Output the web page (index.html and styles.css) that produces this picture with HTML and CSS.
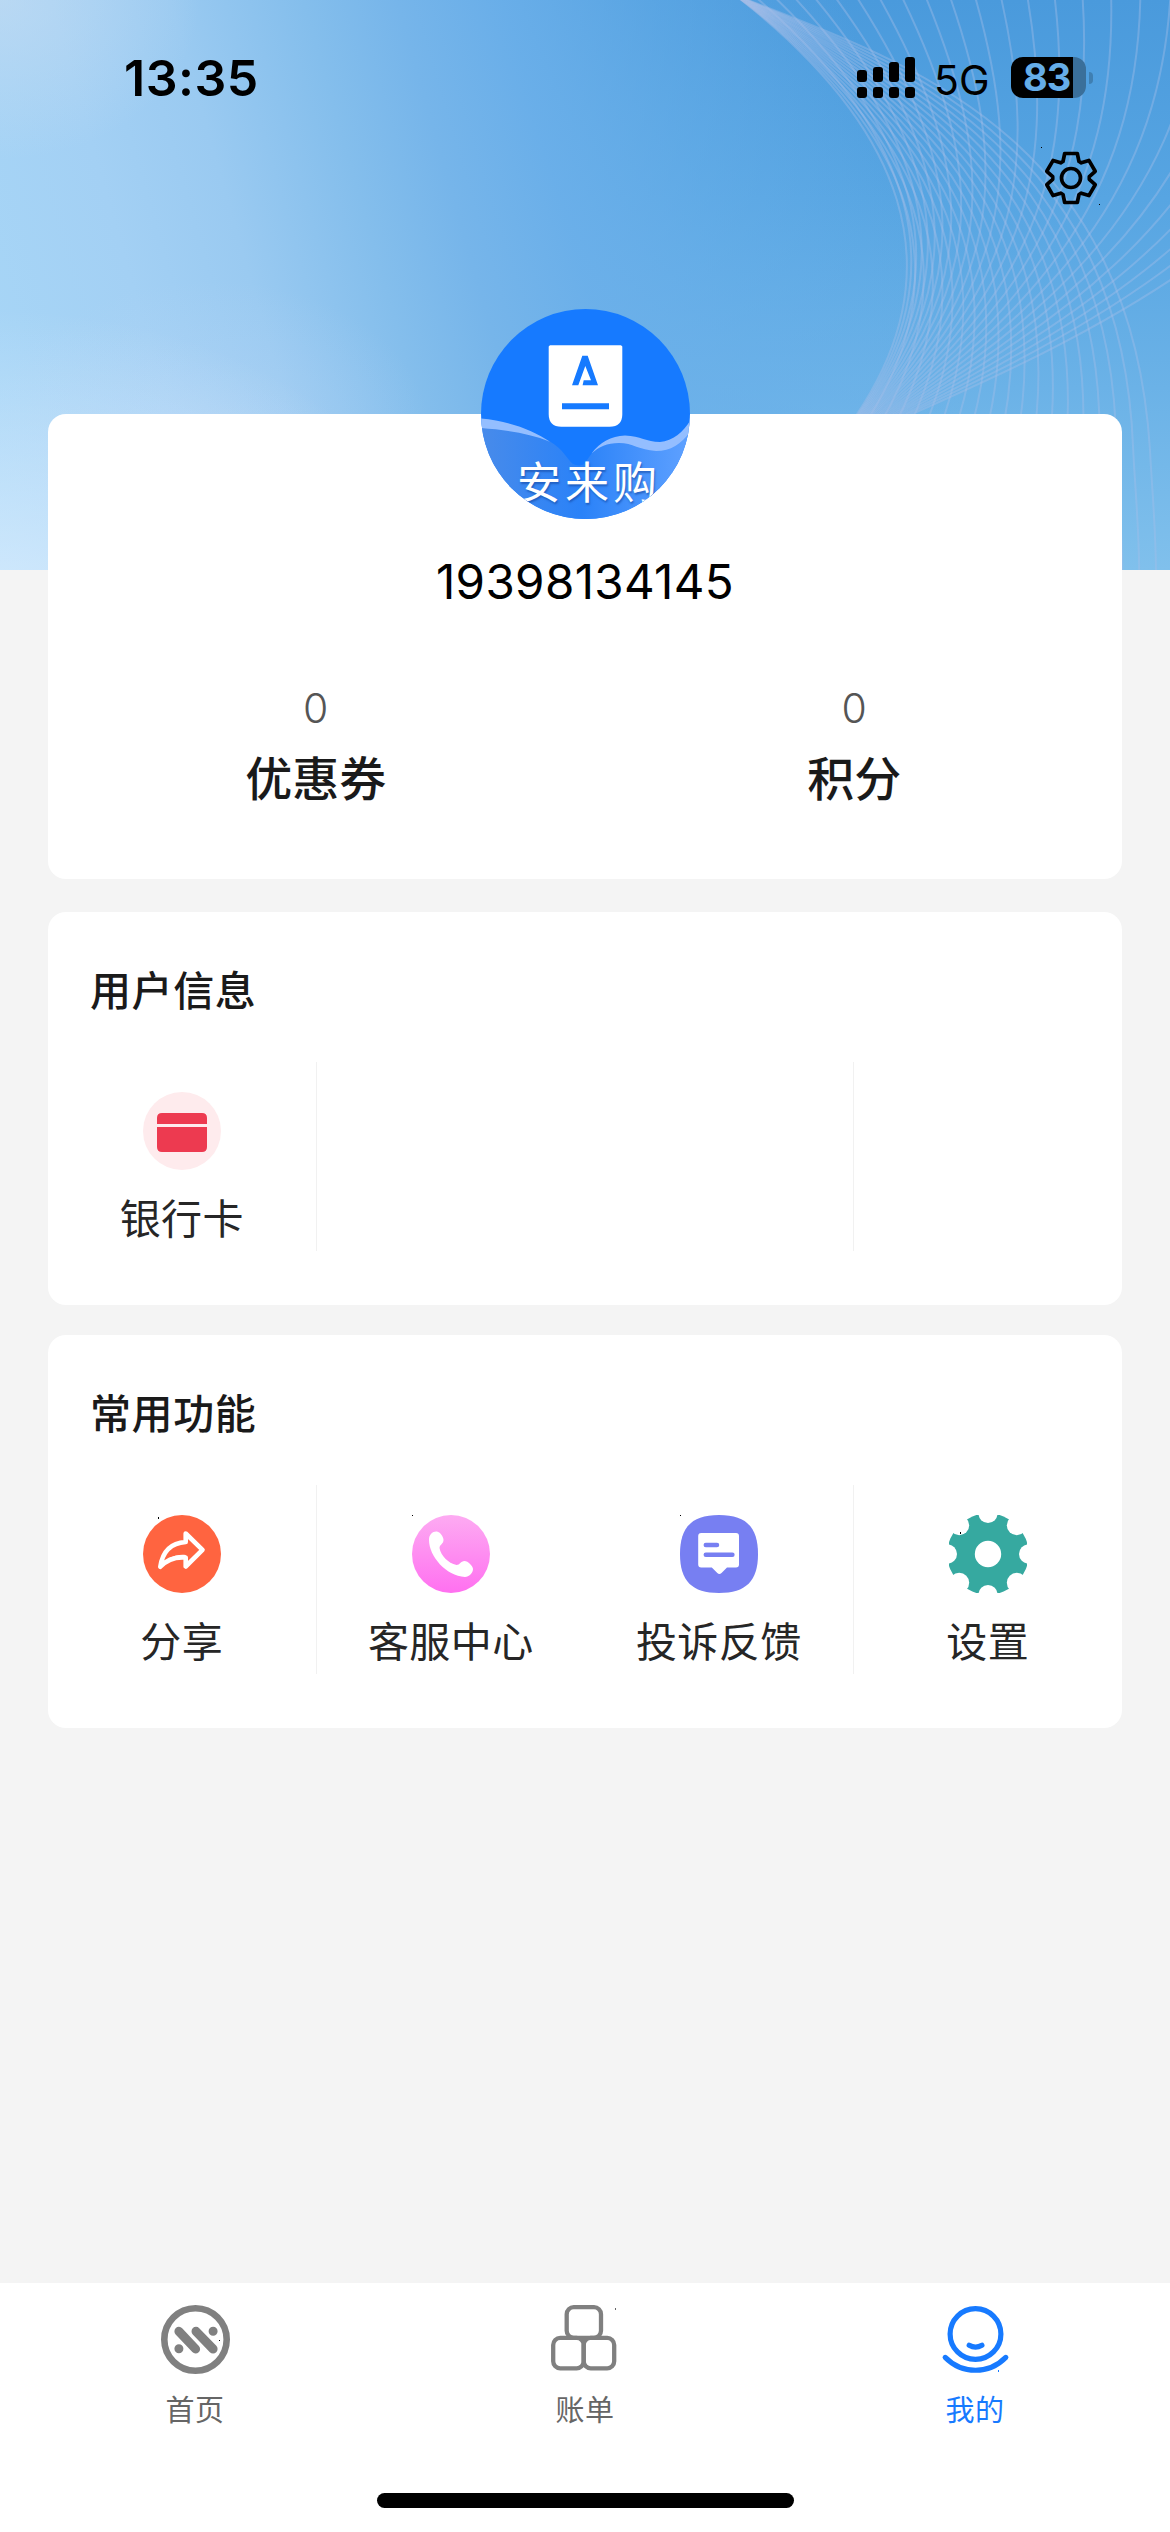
FILE: index.html
```html
<!DOCTYPE html>
<html lang="zh-CN">
<head>
<meta charset="utf-8">
<title>我的</title>
<link rel="stylesheet" href="styles.css">
</head>
<body>
<div class="page">
  <div class="hero">
    <svg class="hero-lines" width="1170" height="570" viewBox="0 0 1170 570"></svg>
  </div>

  <header class="status">
    <span class="clock">13:35</span>
    <div class="status-right">
      <svg width="58" height="41" viewBox="0 0 58 41">
        <rect x="0" y="13" width="10" height="12" rx="3"/><rect x="16" y="10" width="10" height="15" rx="3"/><rect x="32" y="5" width="10" height="20" rx="3"/><rect x="48" y="0" width="10" height="25" rx="3"/>
        <rect x="0" y="30" width="10" height="11" rx="3"/><rect x="16" y="30" width="10" height="11" rx="3"/><rect x="32" y="30" width="10" height="11" rx="3"/><rect x="48" y="30" width="10" height="11" rx="3"/>
      </svg>
      <span class="network">5G</span>
      <div class="battery"><span class="level">83</span></div>
      <span class="nub"></span>
    </div>
  </header>

  <div class="toolbar">
    <svg width="60" height="60" viewBox="-30 -31 60 60" fill="none" stroke="#000" stroke-width="3.7" stroke-linejoin="round">
      <path d="M-8-16.5-6.3-24.5H6.3L8-16.5 10.3-15.2 17.9-17.6 24.2-6.7 18.3-1.3V1.3L24.2 6.7 17.9 17.6 10.3 15.2 8 16.5 6.3 24.5H-6.3L-8 16.5-10.3 15.2-17.9 17.6-24.2 6.7-18.3 1.3V-1.3L-24.2-6.7-17.9-17.6-10.3-15.2Z"/>
      <circle r="9.5"/>
      <path d="M-30-31h1v1h-1zM28 26h1v1h-1z" fill="#000" stroke="none"/>
    </svg>
  </div>

  <main class="content">
    <section class="card profile">
      <svg class="avatar" width="209" height="210" viewBox="0 0 209 210">
        <defs>
          <clipPath id="disc"><ellipse cx="104.5" cy="105" rx="104.5" ry="105"/></clipPath>
          <linearGradient id="sea" x1="0" y1="0" x2="1" y2="0"><stop offset="0" stop-color="#488bea"/><stop offset=".48" stop-color="#2a82f8"/><stop offset="1" stop-color="#5fa1ff"/></linearGradient>
        </defs>
        <g clip-path="url(#disc)">
          <rect width="209" height="210" fill="#167aff"/>
          <path fill="url(#sea)" d="M0 118C30 120 50 124 69 132.500C82 140 86 150 92 155C96 157 102 157 104 154C108 148 113 141 118 137C130 130 150 132 165 139C185 146 200 132 209 120V210H0Z"/>
          <path fill="#94beff" d="M0 109.500C28 112 52 121 69 132.700C48 124 25 121 0 119Z"/>
          <path fill="#94beff" d="M110.500 144.500C119 133 130 127 144 126.500C160 127 165 133 179 133C192 132 202 123 209 112V123C200 135 190 142 175 142C158 141 152 134 138 134C126 134 118 138 110.500 144.500Z"/>
          <path fill="#fff" d="M69 36.300H140L141.300 37.600V105Q141.300 117.700 128.600 117.700H80.400Q67.700 117.700 67.700 105V37.600Z"/>
          <path fill="#167aff" d="M101.300 46.700H106.700L117 76.300H101.600L102.700 71.300H110L104.300 57 97.300 76.300H91ZM81 94.300H128V100.200H81Z"/>
          <text class="avatar-name" x="36" y="189.500">安来购</text>
        </g>
      </svg>
      <div class="phone">19398134145</div>
      <div class="stats">
        <div class="stat"><span class="stat-value">0</span><span class="stat-label">优惠券</span></div>
        <div class="stat"><span class="stat-value">0</span><span class="stat-label">积分</span></div>
      </div>
    </section>

    <section class="card panel">
      <h2>用户信息</h2>
      <div class="grid">
        <div class="cell ruled">
          <svg width="78" height="78" viewBox="0 0 78 78"><circle cx="39" cy="39" r="39" fill="#feebed"/><path fill="#ed3a50" d="M19 21H59Q64 21 64 26V32H14V26Q14 21 19 21ZM14 35H64V55Q64 60 59 60H19Q14 60 14 55Z"/></svg>
          <span>银行卡</span>
        </div>
        <div class="cell"></div>
        <div class="cell ruled"></div>
        <div class="cell"></div>
      </div>
    </section>

    <section class="card panel">
      <h2>常用功能</h2>
      <div class="grid">
        <div class="cell ruled">
          <svg width="78" height="78" viewBox="0 0 78 78"><circle cx="39" cy="39" r="39" fill="#ff6440"/><path fill="none" stroke="#fff" stroke-width="4.600" stroke-linejoin="round" d="M42.700 18.500 59.500 34.800 42.700 51.500V42.500C32 41.500 24 44.500 17.300 51.800C19.500 37 27 28 42.700 27Z"/><path fill="#fff" d="M17 52C24 43 32 39 42.700 40V44C32 43 25 46 19 52Z"/><rect x="15" y="2" width="1" height="2"/></svg>
          <span>分享</span>
        </div>
        <div class="cell">
          <svg width="78" height="78" viewBox="0 0 78 78"><defs><linearGradient id="pink" x1="0" y1="0" x2="0" y2="1"><stop offset="0" stop-color="#fdabf2"/><stop offset="1" stop-color="#ff70f0"/></linearGradient></defs><circle cx="39" cy="39" r="39" fill="url(#pink)"/><path fill="#fff" d="M17 25C17 19 21 16 25 16.500C28 17 31.500 22 31.500 25C31.500 29 27.500 29.500 27.500 33C29 41 36 48 44.500 50C48 50 48.500 46 52.500 46C56 46 61 51 61 54C61 58 57 62 53 62C34 61 17 41 17 25Z"/><rect width="1" height="1"/></svg>
          <span>客服中心</span>
        </div>
        <div class="cell ruled">
          <svg width="78" height="78" viewBox="0 0 78 78"><path fill="#777ff2" d="M39 0C66 0 78 12 78 39S66 78 39 78 0 66 0 39 12 0 39 0Z"/><path fill="#fff" d="M21.200 18H56Q59 18 59 21V49.500Q59 52.500 56 52.500H47L41.500 58Q39.400 60 37.300 58L31.800 52.500H21.200Q18.200 52.500 18.200 49.500V21Q18.200 18 21.200 18Z"/><path stroke="#777ff2" stroke-width="4.500" stroke-linecap="round" d="M25.800 30H37M25.800 39.700H52.400"/><rect width="1" height="1"/></svg>
          <span>投诉反馈</span>
        </div>
        <div class="cell">
          <svg width="78" height="78" viewBox="-39 -39 78 78"><circle r="40.700" fill="#36a9a0"/><g fill="#fff"><circle r="13.200"/><circle cx="40.500" r="9.500"/><circle cx="-40.500" r="9.500"/><circle cy="40.500" r="9.500"/><circle cy="-40.500" r="9.500"/><circle cx="28.800" cy="28.800" r="10"/><circle cx="-28.800" cy="28.800" r="10"/><circle cx="28.800" cy="-28.800" r="10"/><circle cx="-28.800" cy="-28.800" r="10"/></g><rect x="-28" y="-22" width="1" height="2"/></svg>
          <span>设置</span>
        </div>
      </div>
    </section>
  </main>

  <nav class="tabs">
    <div class="tab">
      <svg width="69" height="69" viewBox="0 0 69 69" fill="none" stroke="#808080"><circle cx="34.500" cy="34.500" r="31.200" stroke-width="6.600"/><path stroke-width="9" stroke-linecap="round" d="M17.900 26.300 34.600 44M35 26.300 52.100 44M17.900 43.700h.01M52.100 26.300h.01"/><rect x="58" y="35" width="1" height="1" fill="#000" stroke="none"/></svg>
      <span>首页</span>
    </div>
    <div class="tab">
      <svg width="69" height="69" viewBox="0 0 69 69" fill="none" stroke="#808080" stroke-width="4.300"><rect x="15.700" y="2.200" width="34.300" height="30.600" rx="7"/><rect x="2.200" y="32.900" width="30.500" height="30.400" rx="7"/><rect x="32.700" y="32.900" width="30.500" height="30.400" rx="7"/><rect x="64" y="3" width="1" height="2" fill="#666" stroke="none"/></svg>
      <span>账单</span>
    </div>
    <div class="tab active">
      <svg width="69" height="69" viewBox="0 0 69 69" fill="none" stroke="#177aff" stroke-width="5.200" stroke-linecap="round"><circle cx="34.500" cy="29" r="25.400"/><path d="M28.200 40.300Q34.500 44 40.900 40.300M4.200 52.400C21 69.500 48 69.500 64.800 52.400"/><rect x="57" y="65" width="1" height="2" fill="#177aff" stroke="none"/></svg>
      <span>我的</span>
    </div>
  </nav>
  <div class="home-indicator"></div>
</div>
<script src="waves.js"></script>
</body>
</html>
```
FILE: styles.css
```css
* { box-sizing: border-box; }

body {
  margin: 0;
  background: #f4f4f4;
  font-family: Inter, "Noto Sans CJK SC", sans-serif;
  color: #000;
}

svg { display: block; flex: none; }

.page {
  position: relative;
  width: 1170px;
  height: 2532px;
  display: flex;
  flex-direction: column;
  overflow: hidden;
}

.hero {
  position: absolute;
  inset: 0 0 auto;
  height: 570px;
  background:
    radial-gradient(ellipse 460px 330px at 0 640px, rgba(226, 240, 255, .8), rgba(226, 240, 255, 0)),
    radial-gradient(ellipse 200px 160px at 0 0, rgba(196, 220, 242, .65), rgba(196, 220, 242, 0)),
    radial-gradient(ellipse 220px 150px at 210px 430px, rgba(184, 214, 246, .45), rgba(184, 214, 246, 0)),
    linear-gradient(74deg, #a8d7f7 0, #a3d0f4 16%, #9acaf1 25%, #84beec 35%, #76b5ea 42%, rgba(108, 176, 234, .9) 50%, rgba(106, 176, 234, .5) 61%, rgba(106, 176, 234, 0) 76%),
    linear-gradient(180deg, #4a9adc 0, #57a5e2 35%, #6bb2e7 68%, #80c0ec 100%);
}

.hero-lines { fill: none; stroke: rgba(166, 190, 232, .4); stroke-width: 2; }

.status {
  position: relative;
  height: 141px;
  padding: 15px 77px 0 124px;
  display: flex;
  align-items: center;
  justify-content: space-between;
}

.clock { font-size: 50px; font-weight: 600; line-height: 60px; letter-spacing: .5px; }

.status-right { display: flex; align-items: center; margin-top: -1px; }

.network { width: 56px; margin: 4px 21px 0 19px; font-size: 41px; line-height: 48px; }

.battery {
  width: 75px;
  height: 41px;
  padding-left: 12px;
  border-radius: 12px;
  background: linear-gradient(90deg, #000 62px, #3a6f9a 62px);
  display: flex;
  align-items: center;
}

.level { color: #65ade8; font-size: 38px; font-weight: 700; line-height: 41px; letter-spacing: -1px; }

.nub { width: 4px; height: 12px; margin: 0 0 0 3px; border-radius: 0 4px 4px 0; background: #3f7fb2; }

.toolbar { position: relative; height: 273px; padding: 6px 69px 0 0; display: flex; justify-content: flex-end; }

.content { position: relative; flex: 1; padding: 0 48px; display: flex; flex-direction: column; }

.card { background: #fff; border-radius: 18px; }

.profile {
  height: 465px;
  margin-bottom: 33px;
  display: flex;
  flex-direction: column;
  align-items: center;
}

.avatar { margin-top: -105px; }

.avatar-name {
  font-family: "Noto Sans CJK SC", sans-serif;
  font-size: 44px;
  letter-spacing: 4px;
  fill: #fff;
  text-shadow: 1px 2px 2px rgba(20, 70, 160, .6);
}

.phone { margin-top: 33px; font-size: 47.5px; line-height: 60px; letter-spacing: .35px; }

.stats { width: 100%; margin-top: 66px; padding: 0 -3px; display: flex; justify-content: center; gap: 3px; }

.stat { width: 536px; display: flex; flex-direction: column; align-items: center; }

.stat-value { font-size: 41px; font-weight: 350; line-height: 60px; color: #555; }

.stat-label { margin-top: 8px; font-family: "Noto Sans CJK SC", sans-serif; font-size: 47px; font-weight: 500; line-height: 60px; color: #1a1a1a; }

.panel { height: 393px; margin-bottom: 30px; padding-top: 46px; }

.panel h2 { margin: 0 0 44px 42px; font-family: "Noto Sans CJK SC", sans-serif; font-size: 41px; font-weight: 500; line-height: 60px; letter-spacing: .6px; color: #1a1a1a; }

.grid { display: grid; grid-template-columns: repeat(4, 1fr); }

.cell {
  height: 189px;
  padding-top: 30px;
  display: flex;
  flex-direction: column;
  align-items: center;
  font-family: "Noto Sans CJK SC", sans-serif;
  font-size: 41px;
  line-height: 60px;
  letter-spacing: .4px;
  color: #262626;
}

.cell span { margin-top: 16px; }

.ruled { border-right: 1px solid #f1f1f1; }

.tabs {
  height: 210px;
  padding-top: 22px;
  background: #fff;
  display: grid;
  grid-template-columns: repeat(3, 1fr);
}

.tab {
  display: flex;
  flex-direction: column;
  align-items: center;
  font-family: "Noto Sans CJK SC", sans-serif;
  font-size: 29px;
  line-height: 40px;
  letter-spacing: .5px;
  color: #666;
}

.tab span { margin-top: 14px; }

.tab.active { color: #177aff; }

.home-indicator { height: 39px; background: #fff; display: flex; justify-content: center; }

.home-indicator::before { content: ""; width: 417px; height: 15px; border-radius: 8px; background: #000; }
```
FILE: waves.js
```js
// Two fans of thin curves that share the same left edge and cross over each other.
const svg = document.querySelector('.hero-lines');
const mix = (a, b, t) => a + (b - a) * t;

function curve(points) {
  const path = document.createElementNS('http://www.w3.org/2000/svg', 'path');
  const [p0, p1, p2, p3] = points.map(p => p.map(n => n.toFixed(1)).join(' '));
  path.setAttribute('d', `M${p0}C${p1} ${p2} ${p3}`);
  svg.appendChild(path);
}

for (let i = 0; i <= 19; i++) {
  const t = i / 19;
  curve([[735, -5], [mix(890, 900, t), mix(115, 60, t)], [mix(980, 1130, t), mix(270, 130, t)], [mix(830, 1150, t), 450]]);
  if (t > 0.28) {
    const x = mix(830, 1150, t);
    curve([[x, 450], [x + 2, 490], [x + 6, 530], [x + 6, 575]]);
  }
}

for (let i = 1; i <= 25; i++) {
  const t = i / 25;
  curve([[735 + 450 * t + 215 * t * t, -5], [mix(890, 1330, t) - 240 * t * (1 - t), mix(115, 240, t)], [mix(980, 1060, t), mix(270, 350, t)], [830, 450]]);
}
```
